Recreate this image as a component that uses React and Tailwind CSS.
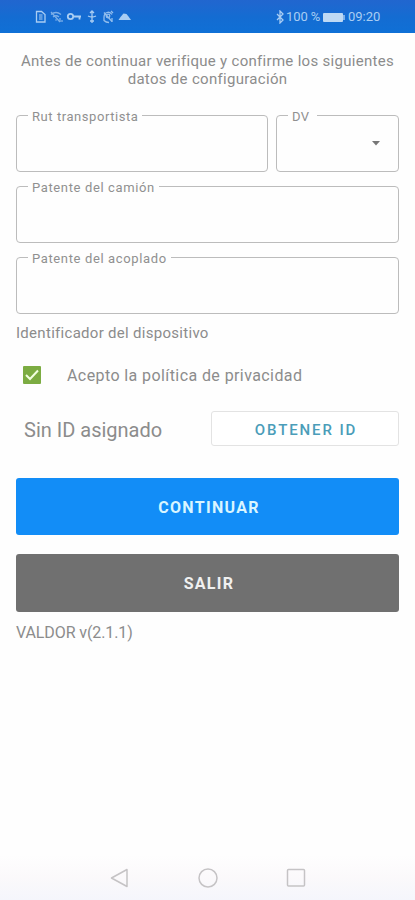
import { useState } from "react";

function StatusBar() {
  return (
    <header className="flex h-[33px] items-center justify-between bg-gradient-to-b from-[#2166cf] via-[#146cd2] to-[#0f70d6] pl-[35px] pr-[34px] pt-px text-[#a9cdf3]">
      <svg width="98" height="18" viewBox="0 0 98 18" fill="none" stroke="currentColor" strokeWidth="1.3">
        <path d="M1.5 3.5h5l3.5 3v7.5h-8.500z" />
        <path d="M4 7h3.500M4 9h3.500M4 11h3.500" strokeWidth="1" />
        <g opacity="0.7">
          <path d="M16 6.500q5-4 10 0M18 9q3-2.500 6 0M16 4l9 10M20.500 11.500l1 1" />
          <path d="M25 10v4M27 12v2" />
        </g>
        <circle cx="35.500" cy="8.500" r="2.700" strokeWidth="1.800" />
        <path d="M38.500 8.500h7.500M44.500 8.500v3" strokeWidth="1.800" />
        <path d="M57 3v12M53 8q4 2 8 0M55 5l2-2 2 2M55 13h4" />
        <g opacity="0.85">
          <path d="M69 4.500l8 9M77 6.500q-2-3-5-2t-3 5v3q2 2 5 2M76 3l2 2" />
          <circle cx="73" cy="8" r="1.800" />
          <path d="M77 10v4" />
        </g>
        <path d="M83.500 12l2-3 3-3.500 3 .5 2 2.500 2.500 3.500z" fill="currentColor" stroke="none" />
      </svg>
      <div className="flex items-center text-[13px]">
        <svg width="8" height="14" viewBox="0 0 8 14" fill="none" stroke="currentColor" strokeWidth="1.300">
          <path d="M1 4l6 6-3 3V1l3 3-6 6" />
        </svg>
        <span className="ml-[2px] w-[35px] whitespace-nowrap tracking-[-0.1px]">100 %</span>
        <span className="ml-[2px] h-[9px] w-[20px] rounded-[1px] bg-[#bed9f4]" />
        <span className="h-[5px] w-[2px] bg-[#7fb2ea]" />
        <span className="ml-[3px] w-[33px]">09:20</span>
      </div>
    </header>
  );
}

function Campo({ label, className, labelClass, children }) {
  return (
    <fieldset className={`min-w-0 rounded-[4px] border border-[#bcbcbc] pl-[11px] ${className}`}>
      <legend className={`h-4 whitespace-nowrap px-1 text-[13px] leading-[20px] text-[#909090] ${labelClass}`}>
        {label}
      </legend>
      {children}
    </fieldset>
  );
}

export default function App() {
  const [acepta, setAcepta] = useState(true);

  return (
    <div className="flex h-[900px] w-full flex-col bg-[#fefefe] font-['Roboto',sans-serif] text-[#8c8c8c]">
      <StatusBar />

      <main className="flex flex-1 flex-col pl-4 pr-[16px] pt-[19px]">
        <p className="whitespace-nowrap text-center text-[15px] leading-[18px] tracking-[0.3px]">
          Antes de continuar verifique y confirme los siguientes
          <br />
          datos de configuración
        </p>

        <div className="mt-[19px] flex gap-2">
          <Campo label="Rut transportista" className="h-[65px] w-[252px]" labelClass="tracking-[0.56px]" />
          <Campo label="DV" className="h-[65px] flex-1" labelClass="pr-[8px] tracking-[0.3px]">
            <div className="flex h-[40px] items-center justify-end pr-[18px]">
              <svg width="8" height="5" viewBox="0 0 8 5" fill="#777777">
                <path d="M0 0h8L4 4.500z" />
              </svg>
            </div>
          </Campo>
        </div>
        <Campo label="Patente del camión" className="mt-[6px] h-[65px]" labelClass="tracking-[0.63px]" />
        <Campo label="Patente del acoplado" className="mt-[6px] h-[65px]" labelClass="tracking-[0.63px]" />

        <p className="mt-[9px] text-[15px] leading-5 tracking-[0.29px]">Identificador del dispositivo</p>

        <label className="mt-[22px] flex h-5 items-center pl-[7px]">
          <input
            type="checkbox"
            className="sr-only"
            checked={acepta}
            onChange={(e) => setAcepta(e.target.checked)}
          />
          <span className="flex h-[18px] w-[18px] items-center justify-center rounded-[1px] bg-[#7cac42]">
            {acepta && (
              <svg width="16" height="16" viewBox="0 0 16 16" fill="none" stroke="#f2ffe0" strokeWidth="2">
                <path d="M2 8l4 4 8-8.500" />
              </svg>
            )}
          </span>
          <span className="ml-[26px] whitespace-nowrap pt-[2px] text-base leading-5 tracking-[0.41px]">
            Acepto la política de privacidad
          </span>
        </label>

        <div className="mt-[26px] flex h-[35px] items-center justify-between">
          <span className="pl-2 pt-[3px] text-xl">Sin ID asignado</span>
          <button className="h-[35px] w-[188px] rounded-[3px] border border-[#e3e3e3] bg-white pl-[2px] pt-[3px] text-[15px] font-medium tracking-[1.9px] text-[#4b9db9]">
            OBTENER ID
          </button>
        </div>

        <button className="mt-8 h-[57px] rounded-[3px] bg-[#128df7] pl-[3px] pt-[2px] text-base font-bold tracking-[1.3px] text-[#d9f5ff]">
          CONTINUAR
        </button>
        <button className="mt-[19px] h-[58px] rounded-[3px] bg-[#707070] pl-[3px] pt-[2px] text-base font-bold tracking-[1.3px] text-[#f0f0f0]">
          SALIR
        </button>
        <p className="mt-[11px] text-[16px] leading-5 tracking-[-0.1px]">VALDOR v(2.1.1)</p>
      </main>

      <nav className="flex h-[45px] items-center justify-center gap-[68px] bg-gradient-to-b from-[#fefefe] via-[#fbf9fb] to-[#f5f6fc]">
        <svg width="20" height="20" viewBox="0 0 20 20" fill="none" stroke="#c5c3c5" strokeWidth="1.500">
          <path d="M17 1.500v17L1.500 10z" strokeLinejoin="round" />
        </svg>
        <svg width="20" height="20" viewBox="0 0 20 20" fill="none" stroke="#c5c3c5" strokeWidth="1.500">
          <circle cx="10" cy="10" r="9" />
        </svg>
        <svg width="20" height="20" viewBox="0 0 20 20" fill="none" stroke="#c5c3c5" strokeWidth="1.500">
          <rect x="1.500" y="1.500" width="17" height="16.500" rx="1" />
        </svg>
      </nav>
    </div>
  );
}
